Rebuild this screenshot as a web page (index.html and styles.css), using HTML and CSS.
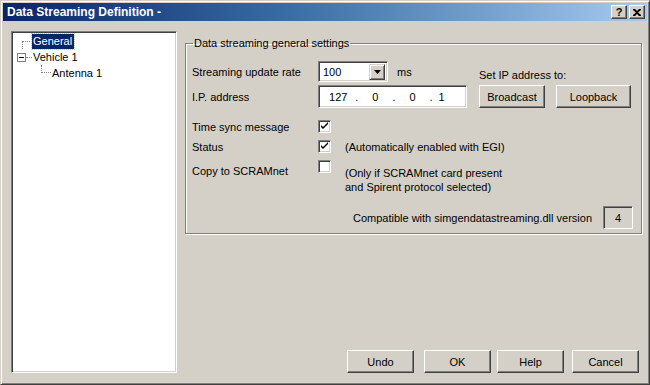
FILE: index.html
```html
<!DOCTYPE html>
<html lang="en">

<head>
  <meta charset="UTF-8">
  <title>Data Streaming Definition</title>
  <link rel="stylesheet" href="styles.css">
</head>

<body>
  <div class="window">
    <div class="titlebar">
      <span class="title">Data Streaming Definition -</span>
      <div class="caption-buttons">
        <span class="cap-btn">?</span>
        <span class="cap-btn">
          <svg width="8" height="7" viewBox="0 0 8 7"><path d="M0 0h2l2 2 2-2h2v1L5 3.5 8 6v1H6L4 5 2 7H0V6l3-2.5L0 1z" fill="#000"/></svg>
        </span>
      </div>
    </div>

    <div class="main">
      <div class="tree">
        <div class="node general">
          <span class="branch"></span>
          <span class="item selected">General</span>
        </div>
        <div class="node vehicle">
          <span class="expander">
            <svg width="9" height="9" viewBox="0 0 9 9"><rect x="0.5" y="0.5" width="8" height="8" fill="#fff" stroke="#808080"/><path d="M2 4.5h5" stroke="#000"/></svg>
          </span>
          <span class="branch"></span>
          <span class="item">Vehicle 1</span>
        </div>
        <div class="node antenna">
          <span class="branch"></span>
          <span class="item">Antenna 1</span>
        </div>
      </div>

      <div class="pane">
        <fieldset class="group">
          <legend>Data streaming general settings</legend>

          <div class="row">
            <span class="label">Streaming update rate</span>
            <div class="middle">
              <div class="combo">
                <span class="combo-value">100</span>
                <span class="combo-arrow">
                  <svg width="7" height="4" viewBox="0 0 7 4"><path d="M0 0h7L3.5 4z" fill="#000"/></svg>
                </span>
              </div>
              <span class="unit">ms</span>
            </div>
            <div class="side side-caption">Set IP address to:</div>
          </div>

          <div class="row ip-row">
            <span class="label">I.P. address</span>
            <div class="middle">
              <div class="ipbox">
                <span class="octet">127</span><span class="dot">.</span>
                <span class="octet">0</span><span class="dot">.</span>
                <span class="octet">0</span><span class="dot">.</span>
                <span class="octet last">1</span>
              </div>
            </div>
            <div class="side side-buttons">
              <button class="btn broadcast">Broadcast</button>
              <button class="btn loopback">Loopback</button>
            </div>
          </div>

          <div class="row check-row first-check">
            <span class="label">Time sync message</span>
            <span class="checkbox"><svg width="9" height="9" viewBox="0 0 9 9"><path d="M1 3v2l2 2 5-5V0L3 5z" fill="#000"/></svg></span>
          </div>

          <div class="row check-row">
            <span class="label">Status</span>
            <span class="checkbox"><svg width="9" height="9" viewBox="0 0 9 9"><path d="M1 3v2l2 2 5-5V0L3 5z" fill="#000"/></svg></span>
            <span class="note">(Automatically enabled with EGI)</span>
          </div>

          <div class="row check-row scram-row">
            <span class="label">Copy to SCRAMnet</span>
            <span class="checkbox"></span>
            <span class="note">(Only if SCRAMnet card present<br>and Spirent protocol selected)</span>
          </div>

          <div class="row version-row">
            <span>Compatible with simgendatastreaming.dll version</span>
            <span class="version">4</span>
          </div>
        </fieldset>

        <div class="actions">
          <button class="btn action undo">Undo</button>
          <button class="btn action ok">OK</button>
          <button class="btn action help">Help</button>
          <button class="btn action">Cancel</button>
        </div>
      </div>
    </div>
  </div>
</body>

</html>
```

FILE: styles.css
```css
* {
  box-sizing: border-box;
}

body {
  margin: 0;
  width: 650px;
  height: 385px;
  overflow: hidden;
  font-family: "Liberation Sans", Arial, sans-serif;
  font-size: 11px;
  color: #000;
  background: #d4d0c8;
}

.window {
  width: 650px;
  height: 385px;
  display: flex;
  flex-direction: column;
  background: #d4d0c8;
  border: 1px solid;
  border-color: #d4d0c8 #404040 #404040 #d4d0c8;
  box-shadow: inset 1px 1px 0 #fff, inset -1px -1px 0 #808080;
  padding: 2px;
}

/* title bar */
.titlebar {
  height: 18px;
  display: flex;
  align-items: center;
  justify-content: space-between;
  padding: 0 2px 0 4px;
  background: linear-gradient(90deg, #0a246a 0%, #3a6ea5 45%, #a6caf0 100%);
}

.title {
  color: #fff;
  font-weight: bold;
  font-size: 12px;
}

.caption-buttons {
  display: flex;
  gap: 2px;
}

.cap-btn {
  width: 16px;
  height: 14px;
  display: flex;
  align-items: center;
  justify-content: center;
  background: #d4d0c8;
  border: 1px solid;
  border-color: #fff #404040 #404040 #fff;
  box-shadow: inset -1px -1px 0 #808080;
  font-weight: bold;
  font-size: 11px;
  line-height: 1;
}

/* main area */
.main {
  flex: 1;
  display: flex;
  gap: 8px;
  padding: 10px 5px 9px 8px;
}

.tree {
  width: 166px;
  background: #fff;
  border: 1px solid;
  border-color: #808080 #fff #fff #808080;
  box-shadow: inset 1px 1px 0 #404040, inset -1px -1px 0 #d4d0c8;
  padding: 1px 2px;
}

.node {
  height: 16px;
  display: flex;
  align-items: center;
}

.branch {
  width: 10px;
}

.general {
  padding-left: 8px;
}

.general .branch {
  align-self: flex-end;
  height: 8px;
  border-top: 1px dotted #808080;
  border-left: 1px dotted #808080;
}

.vehicle {
  padding-left: 3px;
}

.vehicle .branch {
  width: 6px;
  border-top: 1px dotted #808080;
}

.expander {
  display: flex;
}

.antenna {
  padding-left: 27px;
}

.antenna .branch {
  align-self: flex-start;
  height: 8px;
  border-left: 1px dotted #808080;
  border-bottom: 1px dotted #808080;
}

.item {
  padding: 1px 2px 1px 1px;
  line-height: 13px;
}

.item.selected {
  background: #0a246a;
  color: #fff;
  outline: 1px dotted #d4c880;
}

/* right pane */
.pane {
  flex: 1;
  display: flex;
  flex-direction: column;
  justify-content: space-between;
}

.group {
  margin: 6px 0 0 0;
  padding: 11px 10px 5px 6px;
  border: 1px solid #808080;
  box-shadow: inset 1px 1px 0 #fff, 1px 1px 0 #fff;
  height: 197px;
}

.group legend {
  padding: 0 1px;
  margin-left: 1px;
  line-height: 13px;
}

.row {
  display: flex;
  align-items: center;
}

.label {
  width: 126px;
  flex-shrink: 0;
}

.middle {
  flex: 1;
  display: flex;
  align-items: center;
  gap: 9px;
}

.side {
  width: 152px;
}

.side-caption {
  align-self: flex-end;
  margin-bottom: 1px;
}

.combo {
  width: 70px;
  height: 21px;
  display: flex;
  align-items: center;
  justify-content: space-between;
  background: #fff;
  border: 1px solid;
  border-color: #808080 #fff #fff #808080;
  box-shadow: inset 1px 1px 0 #404040, inset -1px -1px 0 #d4d0c8;
  padding: 2px 2px 2px 4px;
}

.combo-arrow {
  width: 16px;
  height: 16px;
  display: flex;
  align-items: center;
  justify-content: center;
  background: #d4d0c8;
  border: 1px solid;
  border-color: #d4d0c8 #404040 #404040 #d4d0c8;
  box-shadow: inset 1px 1px 0 #fff, inset -1px -1px 0 #808080;
}

.ip-row {
  margin-top: 3px;
}

.ipbox {
  width: 149px;
  height: 23px;
  display: flex;
  align-items: center;
  background: #fff;
  border: 1px solid;
  border-color: #808080 #fff #fff #808080;
  box-shadow: inset 1px 1px 0 #404040, inset -1px -1px 0 #d4d0c8;
  padding: 0 4px 0 7px;
}

.octet {
  width: 27px;
  text-align: center;
}

.octet.last {
  text-align: left;
  padding-left: 1px;
}

.dot {
  width: 14px;
  text-align: center;
}

.side-buttons {
  display: flex;
  gap: 11px;
}

.btn {
  height: 23px;
  padding: 0;
  font-family: inherit;
  font-size: 11px;
  color: #000;
  background: #d4d0c8;
  border: 1px solid;
  border-color: #fff #404040 #404040 #fff;
  box-shadow: inset -1px -1px 0 #808080;
}

.broadcast {
  width: 66px;
}

.loopback {
  width: 75px;
}

.check-row {
  margin-top: 7px;
  height: 13px;
}

.first-check {
  margin-top: 12px;
}

.checkbox {
  width: 13px;
  height: 13px;
  display: flex;
  align-items: center;
  justify-content: center;
  background: #fff;
  border: 1px solid;
  border-color: #808080 #fff #fff #808080;
  box-shadow: inset 1px 1px 0 #404040, inset -1px -1px 0 #d4d0c8;
}

.note {
  margin-left: 14px;
}

.scram-row {
  align-items: flex-start;
  height: auto;
}

.scram-row .label {
  margin-top: 5px;
}

.scram-row .note {
  margin-top: 6px;
  line-height: 14px;
}

.version-row {
  justify-content: flex-end;
  gap: 11px;
  margin-top: 12px;
}

.version {
  width: 30px;
  height: 23px;
  display: flex;
  align-items: center;
  justify-content: center;
  border: 1px solid;
  border-color: #808080 #fff #fff #808080;
  box-shadow: inset 1px 1px 0 #404040;
  margin-right: -2px;
}

.actions {
  display: flex;
  justify-content: flex-end;
  gap: 8px;
  padding-right: 3px;
}

.action {
  width: 67px;
}

.undo {
  margin-right: 2px;
}

.ok {
  margin-right: -2px;
}
```
